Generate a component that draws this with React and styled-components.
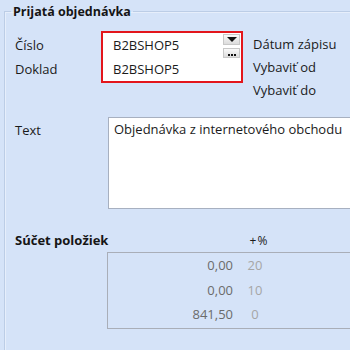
import React from "react";
import styled, { createGlobalStyle } from "styled-components";

const GlobalStyle = createGlobalStyle`
    html, body {
        margin: 0;
        padding: 0;
        background: #d5e3f8;
    }
    body {
        font-family: "Open Sans", "Noto Sans", sans-serif;
        font-size: 12px;
        color: #1b1b1b;
    }
`;

const Page = styled.div`
    width: 350px;
    height: 350px;
    overflow: hidden;
    background: #d5e3f8;
`;

const GroupBox = styled.fieldset`
    margin: 3px 0 0 4px;
    padding: 4px 0 0 10px;
    height: 360px;
    border: 1px solid #bccde6;
    border-right: none;
    box-shadow: inset 1px 1px 0 #e6eefb;
`;

const Legend = styled.legend`
    padding: 0 2px;
    margin-left: -4px;
    font-size: 12.5px;
    font-weight: 700;
    color: #151515;
`;

const TopArea = styled.div`
    display: flex;
    margin-top: 9px;
`;

const LabelCol = styled.div`
    width: ${p => p.width}px;
    display: flex;
    flex-direction: column;
`;

const Label = styled.div`
    height: ${p => p.h || 24}px;
    line-height: ${p => p.h || 24}px;
    font-size: 13px;
    white-space: nowrap;
`;

const Highlight = styled.div`
    width: 138px;
    border: 2px solid #e3161c;
    background: #fff;
    margin-top: -2px;
    align-self: flex-start;
`;

const InputRow = styled.div`
    height: 24px;
    display: flex;
    align-items: center;
    padding-left: 10px;
    font-size: 13px;
`;

const InputText = styled.span`
    flex: 1;
`;

const PickButton = styled.div`
    width: 17px;
    height: ${p => p.h}px;
    margin-right: 1px;
    margin-top: ${p => p.top}px;
    box-sizing: border-box;
    border: 1px solid #c8c8c8;
    background: linear-gradient(#fafafa, #dcdcdc);
    display: flex;
    align-items: center;
    justify-content: center;
    gap: 1px;
    align-self: flex-start;
`;

const Arrow = styled.span`
    width: 0;
    height: 0;
    border-left: 5px solid transparent;
    border-right: 5px solid transparent;
    border-top: 5px solid #111;
`;

const Dot = styled.span`
    width: 2px;
    height: 2px;
    margin-top: 3px;
    background: #111;
`;

const RightCol = styled(LabelCol)`
    margin-left: 10px;
`;

const TextRow = styled.div`
    display: flex;
    margin-top: 15px;
`;

const TextBox = styled.div`
    flex: 1;
    height: 92px;
    margin-left: 93px;
    box-sizing: border-box;
    border: 1px solid #a7b0c0;
    border-right: none;
    background: #fff;
    padding: 1px 5px;
    font-size: 13px;
    line-height: 21px;
    white-space: nowrap;
`;

const TextLabel = styled(Label)`
    position: absolute;
    margin-top: 1px;
`;

const SumHeader = styled.div`
    display: flex;
    align-items: center;
    height: 18px;
    margin-top: 22px;
`;

const SumTitle = styled.div`
    width: 228px;
    font-size: 13px;
    font-weight: 700;
    color: #151515;
`;

const PercentHead = styled.div`
    width: 30px;
    text-align: center;
    font-size: 12px;
    letter-spacing: -1px;
`;

const GreenMark = styled.div`
    margin-left: auto;
    width: 2px;
    height: 10px;
    background: #b9dc93;
`;

const SumTable = styled.div`
    margin: 3px 0 0 92px;
    height: 77px;
    box-sizing: border-box;
    border: 1px solid #a9aeb8;
    border-right: none;
`;

const SumRow = styled.div`
    display: flex;
    height: 24.5px;
    align-items: center;
    font-size: 13px;
`;

const Value = styled.div`
    width: 125px;
    text-align: right;
    color: #6b6b6b;
`;

const Percent = styled.div`
    width: 30px;
    margin-left: 7px;
    text-align: center;
    color: #a6a6a6;
`;

const sums = [
    { value: "0,00", pct: "20" },
    { value: "0,00", pct: "10" },
    { value: "841,50", pct: "0" },
];

export default function App() {
    return (
        <Page>
            <GlobalStyle />
            <GroupBox>
                <Legend>Prijatá objednávka</Legend>
                <TopArea>
                    <LabelCol width={86}>
                        <Label>Číslo</Label>
                        <Label>Doklad</Label>
                    </LabelCol>
                    <Highlight>
                        <InputRow>
                            <InputText>B2BSHOP5</InputText>
                            <PickButton h={11} top={1}><Arrow /></PickButton>
                        </InputRow>
                        <InputRow>
                            <InputText>B2BSHOP5</InputText>
                            <PickButton h={10} top={-9}><Dot /><Dot /><Dot /></PickButton>
                        </InputRow>
                    </Highlight>
                    <RightCol width={100}>
                        <Label h={23}>Dátum zápisu</Label>
                        <Label h={23}>Vybaviť od</Label>
                        <Label h={23}>Vybaviť do</Label>
                    </RightCol>
                </TopArea>
                <TextRow>
                    <TextLabel>Text</TextLabel>
                    <TextBox>Objednávka z internetového obchodu</TextBox>
                </TextRow>
                <SumHeader>
                    <SumTitle>Súčet položiek</SumTitle>
                    <PercentHead>+ %</PercentHead>
                    <GreenMark />
                </SumHeader>
                <SumTable>
                    {sums.map((s, i) => (
                        <SumRow key={i}>
                            <Value>{s.value}</Value>
                            <Percent>{s.pct}</Percent>
                        </SumRow>
                    ))}
                </SumTable>
            </GroupBox>
        </Page>
    );
}
